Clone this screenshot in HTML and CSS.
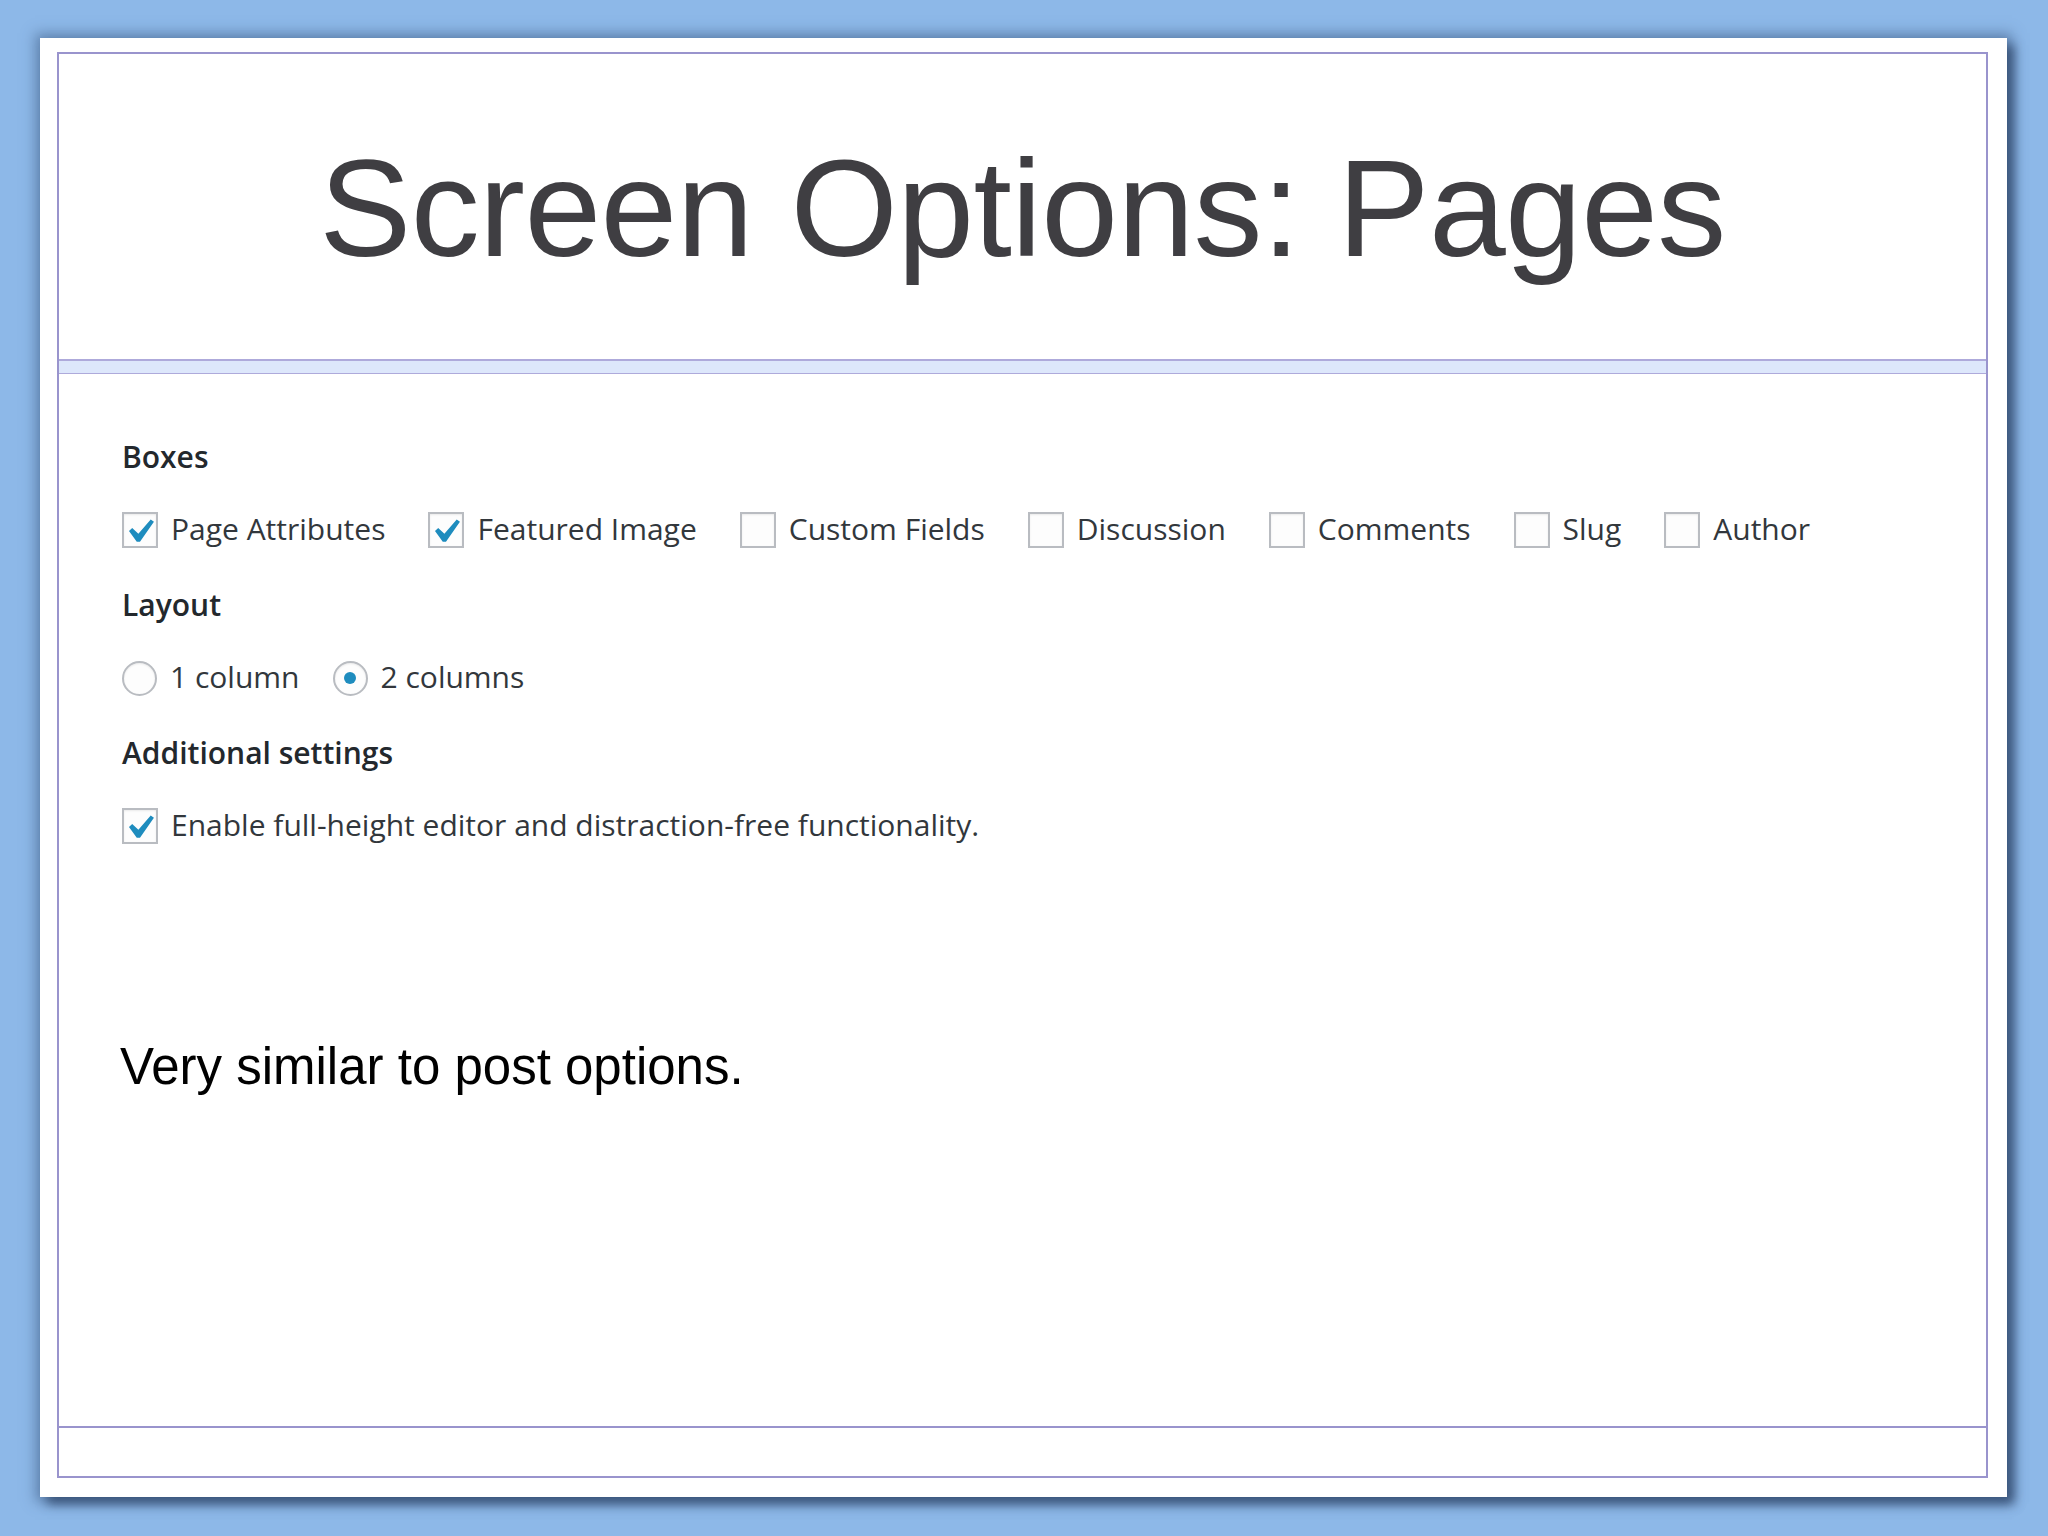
FILE: index.html
```html
<!DOCTYPE html>
<html lang="en">
<head>
<meta charset="utf-8">
<title>Screen Options: Pages</title>
<link rel="stylesheet" href="styles.css">
</head>
<body>
<div class="slide">
  <div class="frame">
    <div class="title-area">
      <h1 class="title">Screen Options: Pages</h1>
    </div>
    <div class="band"></div>
    <div class="body-area">
      <div class="options">
        <div class="heading">Boxes</div>
        <div class="row">
          <span class="opt"><span class="cb"><svg viewBox="3.7 2.6 13.33 13.33"><path d="M14.83 4.89l1.34.94-5.81 8.38H9.02L5.78 9.67l1.34-1.25 2.57 2.4z"/></svg></span><span class="lbl">Page Attributes</span></span>
          <span class="opt"><span class="cb"><svg viewBox="3.7 2.6 13.33 13.33"><path d="M14.83 4.89l1.34.94-5.81 8.38H9.02L5.78 9.67l1.34-1.25 2.57 2.4z"/></svg></span><span class="lbl">Featured Image</span></span>
          <span class="opt"><span class="cb"></span><span class="lbl">Custom Fields</span></span>
          <span class="opt"><span class="cb"></span><span class="lbl">Discussion</span></span>
          <span class="opt"><span class="cb"></span><span class="lbl">Comments</span></span>
          <span class="opt"><span class="cb"></span><span class="lbl">Slug</span></span>
          <span class="opt"><span class="cb"></span><span class="lbl">Author</span></span>
        </div>
        <div class="heading">Layout</div>
        <div class="row row-radio">
          <span class="opt"><span class="radio"></span><span class="lbl">1 column</span></span>
          <span class="opt"><span class="radio checked"><span class="dot"></span></span><span class="lbl">2 columns</span></span>
        </div>
        <div class="heading">Additional settings</div>
        <div class="row">
          <span class="opt"><span class="cb"><svg viewBox="3.7 2.6 13.33 13.33"><path d="M14.83 4.89l1.34.94-5.81 8.38H9.02L5.78 9.67l1.34-1.25 2.57 2.4z"/></svg></span><span class="lbl">Enable full-height editor and distraction-free functionality.</span></span>
        </div>
      </div>
      <p class="note">Very similar to post options.</p>
    </div>
    <div class="footer-area"></div>
  </div>
</div>
</body>
</html>
```

FILE: styles.css
```css
html, body {
  margin: 0;
  padding: 0;
}
body {
  width: 2048px;
  height: 1536px;
  background: #8db8e8;
  overflow: hidden;
  font-family: "Liberation Sans", Arial, sans-serif;
}
.slide {
  box-sizing: border-box;
  margin: 38px 0 0 40px;
  width: 1967px;
  height: 1459px;
  background: #ffffff;
  padding: 14px 19px 19px 17px;
  box-shadow: 0 0 12px 5px rgba(60, 90, 130, 0.5), 7px 7px 10px rgba(40, 60, 95, 0.8);
}
.frame {
  box-sizing: border-box;
  height: 100%;
  border: 2px solid #9994cd;
  display: flex;
  flex-direction: column;
}
.title-area {
  height: 305px;
  display: flex;
  align-items: center;
  justify-content: center;
  padding-top: 3px;
  box-sizing: border-box;
}
.title {
  margin: 0;
  font-family: "Liberation Sans", Arial, sans-serif;
  font-weight: 400;
  font-size: 138px;
  line-height: 1;
  color: #3f3e42;
  letter-spacing: -0.6px;
}
.band {
  height: 12px;
  background: #dde7fb;
  border-top: 2px solid #aeaadb;
  border-bottom: 1px solid #aeaadb;
}
.body-area {
  flex: 1;
  padding: 45px 0 0 63px;
  box-sizing: border-box;
}
.options {
  display: flex;
  flex-direction: column;
  font-family: "Open Sans", "Noto Sans", sans-serif;
  font-size: 30px;
}
.heading {
  height: 74px;
  display: flex;
  align-items: center;
  font-weight: 600;
  color: #23282d;
}
.row {
  height: 74px;
  display: flex;
  align-items: center;
  gap: 43px;
  color: #32373c;
}
.row-radio {
  gap: 33px;
}
.opt {
  display: flex;
  align-items: center;
  gap: 13px;
}
.lbl {
  line-height: 1;
  padding-bottom: 2px;
}
.cb {
  box-sizing: border-box;
  width: 36px;
  height: 36px;
  border: 2px solid #b9bcc1;
  background: #fdfdfd;
  box-shadow: inset 0 1px 2px rgba(0, 0, 0, 0.08);
  display: flex;
}
.cb svg {
  width: 32px;
  height: 32px;
  fill: #1e8cbe;
}
.radio {
  box-sizing: border-box;
  width: 35px;
  height: 35px;
  border: 2px solid #b9bcc1;
  border-radius: 50%;
  background: #fdfdfd;
  box-shadow: inset 0 1px 2px rgba(0, 0, 0, 0.08);
  display: flex;
  align-items: center;
  justify-content: center;
}
.dot {
  width: 12px;
  height: 12px;
  border-radius: 50%;
  background: #1e8cbe;
}
.note {
  margin: 174px 0 0 -2px;
  font-family: "Liberation Sans", Arial, sans-serif;
  font-size: 51px;
  line-height: 60px;
  color: #000000;
}
.footer-area {
  height: 48px;
  border-top: 2px solid #9994cd;
}
```
